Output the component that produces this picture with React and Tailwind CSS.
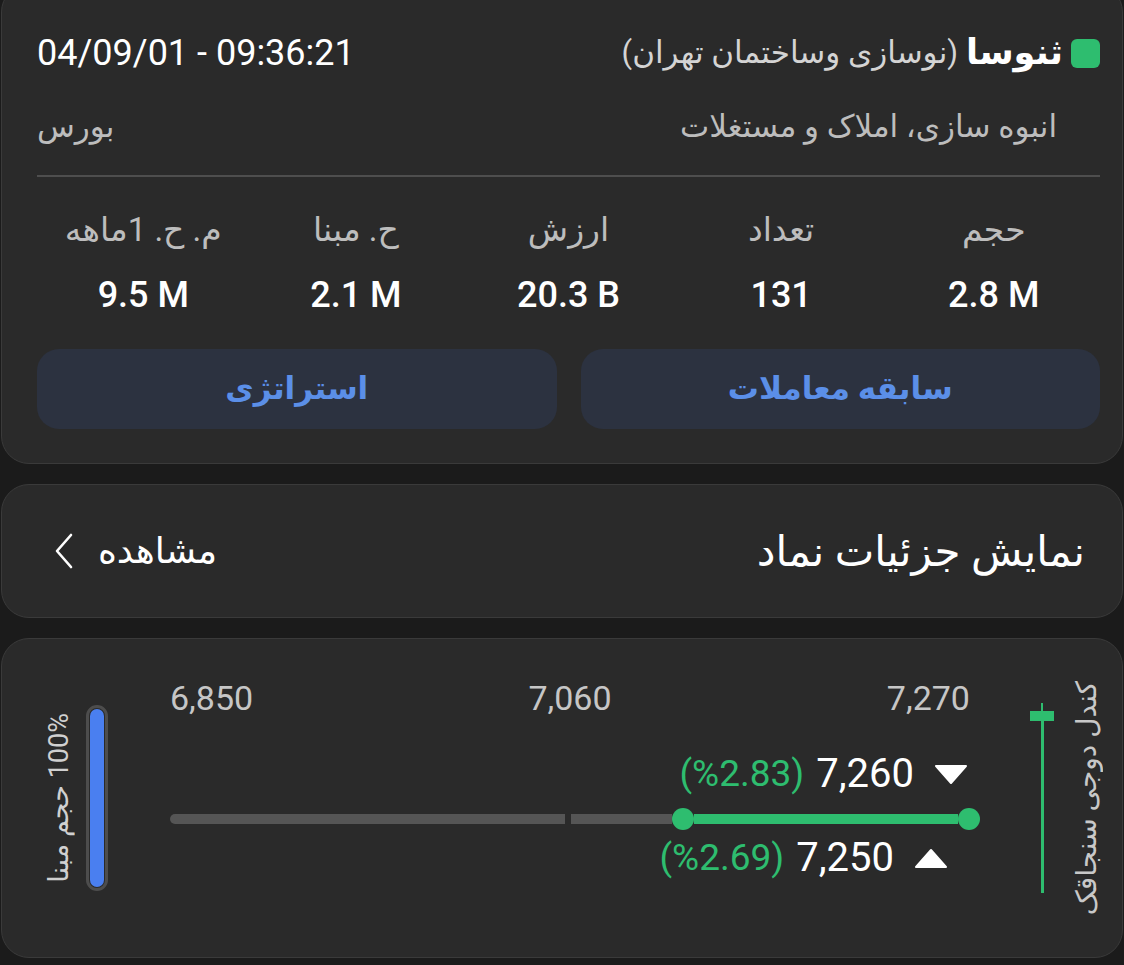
import React from 'react';

const STATS = [
  { label: 'حجم', value: '2.8 M' },
  { label: 'تعداد', value: '131' },
  { label: 'ارزش', value: '20.3 B' },
  { label: 'ح. مبنا', value: '2.1 M' },
  { label: 'م. ح. 1ماهه', value: '9.5 M' },
];

const FONT = { fontFamily: 'Roboto, "DejaVu Sans", sans-serif' };

function InfoCard() {
  return (
    <div dir="rtl" className="mx-[1px] mt-[-16px] rounded-[28px] border border-[#3a3a3a] bg-[#2a2a2a] pt-[44px] pb-[34px] pl-[35px] pr-[22px]">
      <div className="flex h-[48px] items-center justify-between">
        <div className="flex items-center gap-[8px]">
          <span className="h-[29px] w-[29px] rounded-[6px] bg-[#2ebd6f]" />
          <span className="text-[35px] font-bold text-white">ثنوسا</span>
          <span className="text-[31px] text-[#d4d4d4]">(نوسازی وساختمان تهران)</span>
        </div>
        <span dir="ltr" className="text-[36px] text-white">04/09/01 - 09:36:21</span>
      </div>
      <div className="mt-[26px] flex h-[48px] items-center justify-between pr-[43px]">
        <span className="text-[31px] text-[#bdbdbd]">انبوه سازی، املاک و مستغلات</span>
        <span className="text-[31px] text-[#bdbdbd]">بورس</span>
      </div>
      <div className="mt-[24px] h-[2px] bg-[#4e4e4e]" />
      <div className="mt-[29px] grid grid-cols-5">
        {STATS.map((s) => (
          <div key={s.label} className="flex flex-col items-center gap-[17px]">
            <span className="h-[48px] text-[33px] leading-[48px] text-[#bdbdbd]">{s.label}</span>
            <span dir="ltr" className="h-[48px] text-[36px] font-medium leading-[48px] text-white">{s.value}</span>
          </div>
        ))}
      </div>
      <div className="mt-[30px] grid grid-cols-2 gap-[24px]">
        <button className="h-[80px] rounded-[22px] bg-[#2c3240] text-[31px] font-semibold text-[#5b8fe8]">سابقه معاملات</button>
        <button className="h-[80px] rounded-[22px] bg-[#2c3240] text-[31px] font-semibold text-[#5b8fe8]">استراتژی</button>
      </div>
    </div>
  );
}

function DetailsCard() {
  return (
    <div dir="rtl" className="mx-[1px] mt-[20px] flex h-[134px] items-center justify-between rounded-[28px] border border-[#3a3a3a] bg-[#2a2a2a] pl-[52px] pr-[37px]">
      <span className="text-[42px] font-medium text-white">نمایش جزئیات نماد</span>
      <div className="flex items-center gap-[24px]">
        <span className="text-[36px] text-white">مشاهده</span>
        <svg width="20" height="36" viewBox="0 0 20 36" fill="none" stroke="white" strokeWidth="2.6" strokeLinecap="round" strokeLinejoin="round">
          <path d="M17 2 L3 18 L17 34" />
        </svg>
      </div>
    </div>
  );
}

function Triangle({ down }) {
  return (
    <svg width="34" height="20" viewBox="0 0 34 20">
      <path d={down ? 'M2 2 L32 2 L17 19 Z' : 'M2 19 L32 19 L17 2 Z'} fill="white" stroke="white" strokeWidth="2" strokeLinejoin="round" />
    </svg>
  );
}

function CandleCard() {
  return (
    <div className="mx-[1px] mt-[20px] flex h-[320px] items-center rounded-[28px] border border-[#3a3a3a] bg-[#2a2a2a] pl-[44px] pr-[22px]">
      <div dir="rtl" className="rotate-180 text-[27px] leading-[26px] text-[#d0d0d0] [writing-mode:vertical-rl]">100% حجم مبنا</div>
      <div className="ml-[14px] flex h-[186px] w-[22px] rounded-full border-[3px] border-[#4d4d4d] bg-[#2a2a2a] p-[1px]">
        <div className="w-full rounded-full bg-[#4a7ff0]" />
      </div>
      <div className="ml-[62px] flex w-[812px] flex-col self-stretch pt-[37px]">
        <div className="flex h-[44px] w-[800px] items-center justify-between text-[34px] text-[#c6c6c6]">
          <span>6,850</span>
          <span>7,060</span>
          <span>7,270</span>
        </div>
        <div className="mt-[30px] flex h-[48px] items-center justify-end gap-[20px] pr-[12px]">
          <span className="text-[37px] text-[#2ebd6f]">(%2.83)</span>
          <span className="ml-[-8px] text-[40px] text-white">7,260</span>
          <Triangle down />
        </div>
        <div className="mt-[10px] flex h-[22px] items-center">
          <div className="h-[10px] w-[395px] rounded-l-full bg-[#555555]" />
          <div className="ml-[6px] h-[10px] w-[101px] bg-[#555555]" />
          <div className="flex h-[22px] flex-1 items-center">
            <div className="h-[22px] w-[22px] rounded-full bg-[#2ebd6f]" />
            <div className="h-[10px] flex-1 bg-[#2ebd6f]" />
            <div className="h-[22px] w-[22px] rounded-full bg-[#2ebd6f]" />
          </div>
        </div>
        <div className="mt-[4px] flex h-[48px] items-center justify-end gap-[20px] pr-[32px]">
          <span className="text-[37px] text-[#2ebd6f]">(%2.69)</span>
          <span className="ml-[-8px] text-[40px] text-white">7,250</span>
          <Triangle />
        </div>
      </div>
      <div className="ml-[50px] flex h-[190px] w-[24px] flex-col items-center">
        <div className="h-[8px] w-[2px] bg-[#2ebd6f]" />
        <div className="h-[10px] w-[24px] bg-[#2ebd6f]" />
        <div className="w-[3px] flex-1 bg-[#2ebd6f]" />
      </div>
      <div dir="rtl" className="ml-[20px] rotate-180 text-[28px] leading-[26px] text-[#c8c8c8] [writing-mode:vertical-rl]">کندل دوجی سنجاقک</div>
    </div>
  );
}

export default function App() {
  return (
    <div style={FONT} className="h-[965px] w-[1124px] overflow-hidden bg-[#1b1b1b]">
      <InfoCard />
      <DetailsCard />
      <CandleCard />
    </div>
  );
}
